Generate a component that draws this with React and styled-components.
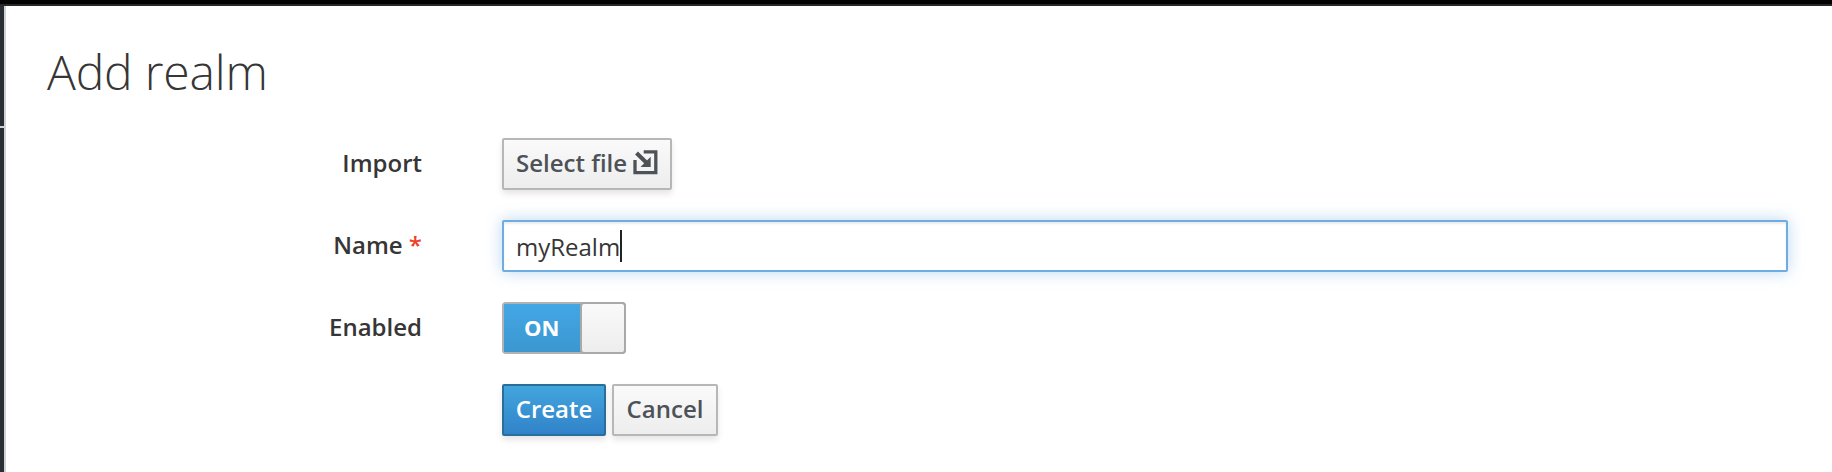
import React from 'react';
import styled, { createGlobalStyle, css } from 'styled-components';

const GlobalStyle = createGlobalStyle`
  * { box-sizing: border-box; }
  body {
    margin: 0;
    background: #fff;
    color: #363636;
    font-family: 'Open Sans', sans-serif;
    font-size: 24px;
    line-height: 40px;
  }
`;

const Page = styled.div`
  display: flex;
  flex-direction: column;
  height: 472px;
  overflow: hidden;
`;

const TopBar = styled.header`
  flex: none;
  height: 6px;
  background: #030303;
  border-bottom: 2px solid #292629;
`;

const Body = styled.div`
  display: flex;
  flex: 1;
`;

const Sidebar = styled.nav`
  display: flex;
  flex-direction: column;
  gap: 2px;
  width: 6px;
  background: #d1d1d1;
  padding-right: 2px;
`;

const SidebarItem = styled.div`
  background: #292e34;
  height: ${(p) => (p.$last ? 'auto' : '120px')};
  flex: ${(p) => (p.$last ? 1 : 'none')};
`;

const Main = styled.main`
  flex: 1;
  padding: 40px 44px 0 40px;
`;

const Title = styled.h1`
  margin: 0 0 40px 1px;
  font-size: 48px;
  font-weight: 300;
  letter-spacing: -0.15px;
  line-height: 52px;
`;

const Form = styled.form`
  display: flex;
  flex-direction: column;
  gap: 30px;
`;

const Row = styled.div`
  display: grid;
  grid-template-columns: 376px 1fr;
  column-gap: 80px;
  height: 52px;
`;

const Label = styled.label`
  padding-top: 5px;
  font-weight: 600;
  text-align: right;
`;

const Required = styled.span`
  color: #f03e2d;
`;

const Controls = styled.div`
  display: flex;
  gap: 6px;
`;

const primary = css`
  color: #fff;
  border-color: #2a6f9c;
  background: linear-gradient(#42a5dd, #3183c9);
`;

const Button = styled.button`
  display: flex;
  align-items: center;
  justify-content: center;
  width: ${(p) => p.$width}px;
  height: 52px;
  padding: 0 0 2px;
  border: 2px solid #b7b7b7;
  border-radius: 2px;
  background: linear-gradient(#fafafa, #ededed);
  box-shadow: 0 4px 6px rgba(3, 3, 3, 0.1);
  color: #4d5258;
  font: 600 24px/40px 'Open Sans', sans-serif;
  white-space: nowrap;
  ${(p) => p.$primary && primary}
`;

const ImportGlyph = styled.svg`
  display: block;
  flex: none;
  width: 25px;
  height: 25px;
  margin: 0 0 1px 6px;
`;

const TextField = styled.div`
  display: flex;
  align-items: center;
  flex: 1;
  height: 52px;
  padding: 2px 12px 0;
  border: 2px solid #6face3;
  border-radius: 2px;
  background: #fff;
  box-shadow: inset 0 2px 2px rgba(3, 3, 3, 0.075), 0 0 16px rgba(82, 154, 222, 0.4);
`;

const Caret = styled.span`
  width: 2px;
  height: 32px;
  margin-bottom: 2px;
  background: #222;
`;

const Switch = styled.div`
  display: flex;
  width: 124px;
  height: 52px;
  border: 2px solid #b2b2b2;
  border-radius: 4px;
`;

const SwitchOn = styled.span`
  flex: 1;
  padding-left: 20px;
  background: linear-gradient(#43a7e5, #3b97cf);
  color: #fff;
  font-size: 22px;
  font-weight: 700;
  line-height: 46px;
`;

const SwitchKnob = styled.span`
  width: 46px;
  margin: -2px;
  border: 2px solid #a9a9a9;
  border-radius: 4px;
  background: linear-gradient(#fafafa, #ededed);
`;

export default function App() {
  return (
    <Page>
      <GlobalStyle />
      <TopBar />
      <Body>
        <Sidebar>
          <SidebarItem />
          <SidebarItem $last />
        </Sidebar>
        <Main>
          <Title>Add realm</Title>
          <Form>
            <Row>
              <Label>Import</Label>
              <Controls>
                <Button type="button" $width={170}>
                  Select file
                  <ImportGlyph viewBox="0 0 25 25" fill="none" stroke="#4d5258">
                    <path d="M10.7 1.8H22.8V22.6H2V10" strokeWidth="3.3" />
                    <path d="M3.5 3L13.5 12.8" strokeWidth="4" />
                    <path d="M17.7 6.7V16.9H7.5Z" fill="#4d5258" stroke="none" />
                  </ImportGlyph>
                </Button>
              </Controls>
            </Row>
            <Row>
              <Label>Name <Required>*</Required></Label>
              <Controls>
                <TextField>myRealm<Caret /></TextField>
              </Controls>
            </Row>
            <Row>
              <Label>Enabled</Label>
              <Controls>
                <Switch>
                  <SwitchOn>ON</SwitchOn>
                  <SwitchKnob />
                </Switch>
              </Controls>
            </Row>
            <Row>
              <span />
              <Controls>
                <Button type="button" $primary $width={104}>Create</Button>
                <Button type="button" $width={106}>Cancel</Button>
              </Controls>
            </Row>
          </Form>
        </Main>
      </Body>
    </Page>
  );
}
